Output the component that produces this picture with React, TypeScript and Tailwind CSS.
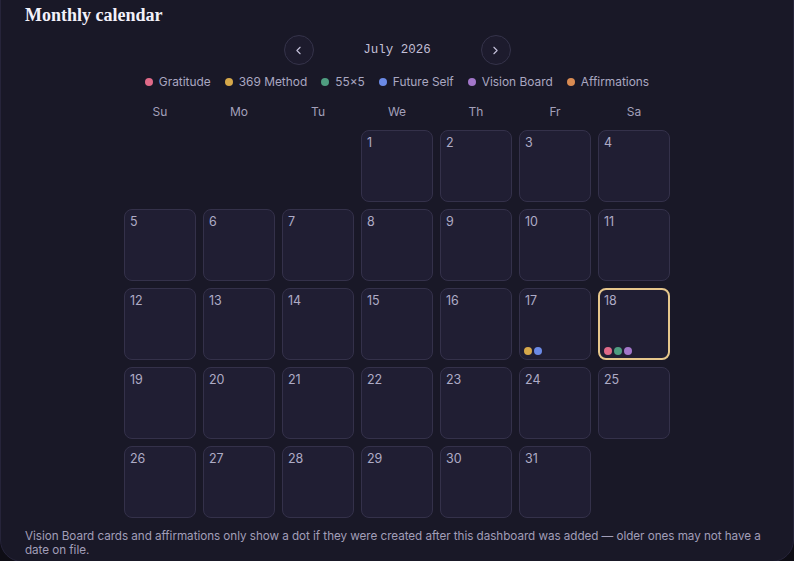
import { ChevronLeft, ChevronRight } from 'lucide-react'

// Journal categories and their dot colours
const LEGEND = [
  { key: 'gratitude', label: 'Gratitude', color: '#e06a88' },
  { key: 'method369', label: '369 Method', color: '#d6a84a' },
  { key: 'fiftyfive', label: '55×5', color: '#4f9d80' },
  { key: 'future', label: 'Future Self', color: '#6b8ae6' },
  { key: 'vision', label: 'Vision Board', color: '#a276c9' },
  { key: 'affirm', label: 'Affirmations', color: '#d98b52' },
]

const COLOR = Object.fromEntries(LEGEND.map((l) => [l.key, l.color]))

const WEEKDAYS = ['Su', 'Mo', 'Tu', 'We', 'Th', 'Fr', 'Sa']

// July 2026 starts on a Wednesday
const FIRST_WEEKDAY = 3
const DAYS_IN_MONTH = 31
const TODAY = 18

const ENTRIES: Record<number, string[]> = {
  17: ['method369', 'future'],
  18: ['gratitude', 'fiftyfive', 'vision'],
}

function DayCell({ day }: { day: number }) {
  const isToday = day === TODAY
  const dots = ENTRIES[day] ?? []

  return (
    <div
      className={
        isToday
          ? 'relative h-[72px] rounded-lg border-2 border-[#e6c78c] bg-[#201e33] px-[4px] pt-[3px]'
          : 'relative h-[72px] rounded-lg border border-[#34314a] bg-[#201e33] px-[5px] pt-[4px]'
      }
    >
      <span className="block text-[12.5px] leading-4 text-[#aeabc6]">{day}</span>
      {dots.length > 0 && (
        <div
          className={
            isToday
              ? 'absolute bottom-[3px] left-[4px] flex gap-[2px]'
              : 'absolute bottom-[4px] left-[4px] flex gap-[2px]'
          }
        >
          {dots.map((d) => (
            <span
              key={d}
              className="h-2 w-2 rounded-full"
              style={{ backgroundColor: COLOR[d] }}
            />
          ))}
        </div>
      )}
    </div>
  )
}

function NavButton({ dir }: { dir: 'prev' | 'next' }) {
  return (
    <button className="flex h-[30px] w-[30px] items-center justify-center rounded-full border border-[#35334a] bg-[#1d1b2d] text-[#c4c1da]">
      {dir === 'prev' ? (
        <ChevronLeft size={13} strokeWidth={2} />
      ) : (
        <ChevronRight size={13} strokeWidth={2} />
      )}
    </button>
  )
}

export default function App() {
  const blanks = Array.from({ length: FIRST_WEEKDAY })
  const days = Array.from({ length: DAYS_IN_MONTH }, (_, i) => i + 1)

  return (
    <div
      className="h-[561px] overflow-hidden bg-[#0e0d15]"
      style={{ fontFamily: 'Inter, "Noto Sans", sans-serif' }}
    >
      <section className="-mt-[30px] rounded-[22px] border border-[#26243a] bg-[#191827] px-6 pb-[4px] pt-[33px]">
        {/* Header */}
        <h2
          className="text-[18px] font-bold leading-[22px] text-[#f3f1fa]"
          style={{ fontFamily: '"Liberation Serif", "DejaVu Serif", serif' }}
        >
          Monthly calendar
        </h2>

        {/* Month switcher */}
        <div className="mt-[9px] flex items-center justify-center">
          <NavButton dir="prev" />
          <span
            className="w-[167px] text-center text-[12.5px] text-[#c2bfd6]"
            style={{ fontFamily: '"Liberation Mono", "DejaVu Sans Mono", monospace' }}
          >
            July 2026
          </span>
          <NavButton dir="next" />
        </div>

        {/* Legend */}
        <div className="mt-2 flex items-center justify-center gap-[14px] text-[11.9px] leading-[18px] text-[#aaa7c1]">
          {LEGEND.map((l) => (
            <div key={l.key} className="flex items-center gap-[6px]">
              <span className="h-2 w-2 rounded-full" style={{ backgroundColor: l.color }} />
              {l.label}
            </div>
          ))}
        </div>

        {/* Calendar grid */}
        <div className="mx-auto mt-[13px] w-[546px]">
          <div className="grid grid-cols-7 gap-x-[7px]">
            {WEEKDAYS.map((w) => (
              <div key={w} className="text-center text-[12px] leading-4 text-[#a3a0ba]">
                {w}
              </div>
            ))}
          </div>
          <div className="mt-[10px] grid grid-cols-7 gap-[7px]">
            {blanks.map((_, i) => (
              <div key={`b${i}`} />
            ))}
            {days.map((d) => (
              <DayCell key={d} day={d} />
            ))}
          </div>
        </div>

        <p className="-mr-1 mt-[11px] text-[11.7px] leading-[14px] tracking-[-0.05px] text-[#a19eb8]">
          Vision Board cards and affirmations only show a dot if they were created after this
          dashboard was added — older ones may not have a date on file.
        </p>
      </section>
    </div>
  )
}
